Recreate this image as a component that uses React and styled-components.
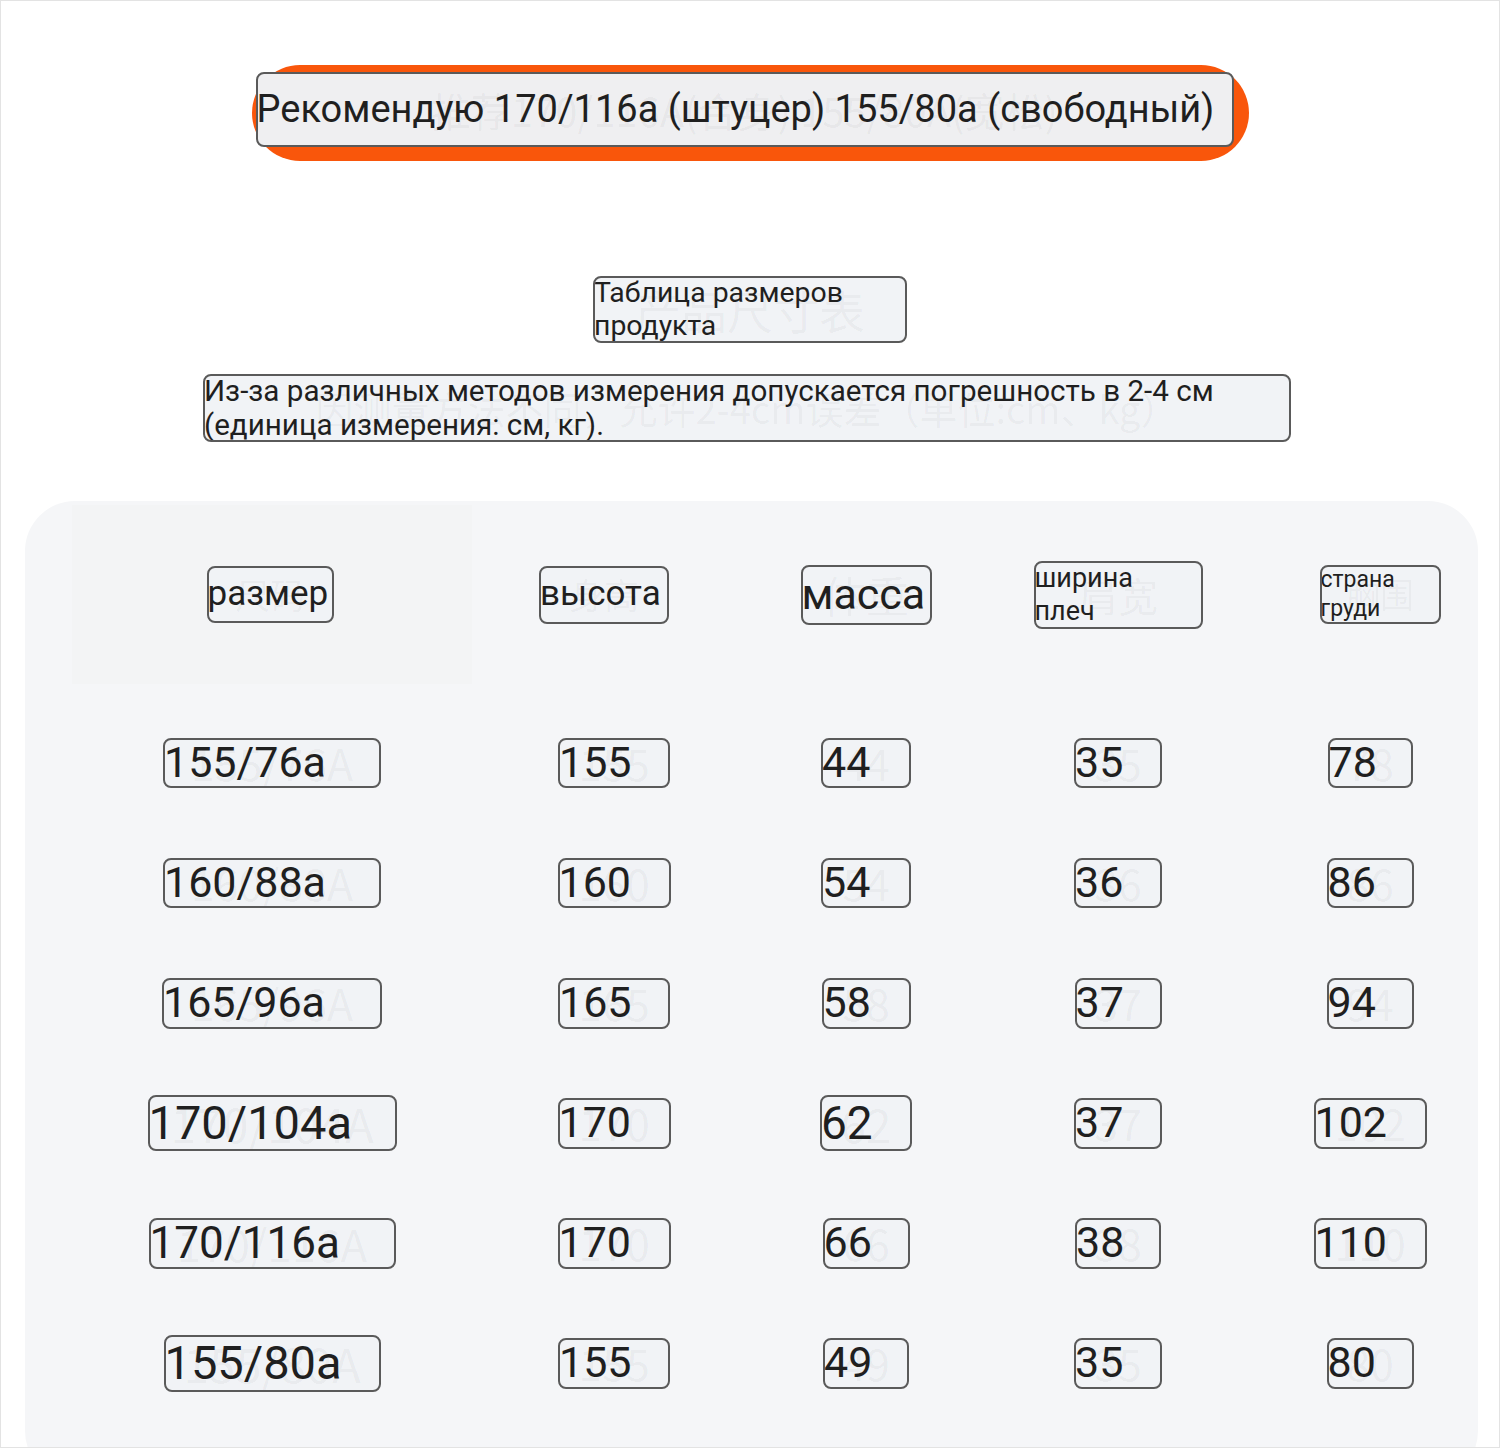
import React from "react";
import styled, { createGlobalStyle } from "styled-components";

const GlobalStyle = createGlobalStyle`
  html, body {
    margin: 0;
    padding: 0;
    background: #ffffff;
  }
  body {
    font-family: Roboto, "Noto Sans", "Noto Sans CJK SC", sans-serif;
    color: #1f1f1f;
  }
`;

const Frame = styled.div`
  box-sizing: border-box;
  width: 1500px;
  height: 1448px;
  border: 1px solid #e3e3e3;
  overflow: hidden;
  display: flex;
  flex-direction: column;
  align-items: center;
  padding-top: 64px;
  background: #ffffff;
`;

const Pill = styled.div`
  box-sizing: border-box;
  width: 997px;
  height: 96px;
  border-radius: 48px;
  background: #f9560b;
  padding: 7px 16px 14px 4px;
  display: flex;
`;

const Box = styled.div`
  position: relative;
  box-sizing: border-box;
  flex: none;
  width: ${(p) => p.$w}px;
  height: ${(p) => p.$h}px;
  margin-left: ${(p) => (p.$dx || 0) * 2}px;
  border: 2px solid #5a5a5a;
  border-radius: 8px;
  background: ${(p) => p.$bg || "#f1f3f6"};
  display: flex;
  align-items: center;
  overflow: hidden;
  font-size: ${(p) => p.$fs}px;
  line-height: ${(p) => p.$lh || 1.15};
`;

const Ghost = styled.span`
  position: absolute;
  inset: 0;
  display: flex;
  align-items: center;
  justify-content: center;
  white-space: nowrap;
  color: rgba(0, 0, 0, 0.045);
  font-size: ${(p) => p.$fs}px;
  font-family: "Noto Sans CJK SC", Roboto, sans-serif;
`;

const Label = styled.span`
  position: relative;
  white-space: pre-line;
  color: #1f1f1f;
  margin-left: -1px;
`;

const Title = styled.div`
  margin-top: 115px;
`;

const Note = styled.div`
  margin-top: 31px;
  margin-left: -6px;
`;

const Panel = styled.div`
  box-sizing: border-box;
  align-self: flex-start;
  margin: 59px 0 0 24px;
  width: 1453px;
  height: 980px;
  flex: none;
  border-radius: 50px;
  background: #f5f6f8;
  padding: 4px 0 0 47px;
`;

const Grid = styled.div`
  display: grid;
  grid-template-columns: 400px 284px 220px 284px 220px;
`;

const HeadCell = styled.div`
  height: 179px;
  display: flex;
  align-items: center;
  justify-content: center;
  background: ${(p) => (p.$shaded ? "#f3f4f5" : "transparent")};
  margin-bottom: 19px;
`;

const Cell = styled.div`
  height: 120px;
  display: flex;
  align-items: center;
  justify-content: center;
`;

const TransBox = ({ text, ghost, w, h, fs, lh, gfs, bg, dx }) => (
  <Box $w={w} $h={h} $fs={fs} $lh={lh} $bg={bg} $dx={dx}>
    <Ghost $fs={gfs || fs}>{ghost}</Ghost>
    <Label>{text}</Label>
  </Box>
);

const header = [
  { text: "размер", ghost: "尺码", w: 127, h: 57, fs: 35, dx: -2 },
  { text: "высота", ghost: "身高", w: 130, h: 58, fs: 35, dx: -10 },
  { text: "масса", ghost: "体重", w: 131, h: 60, fs: 43 },
  { text: "ширина\nплеч", ghost: "肩宽", w: 169, h: 68, fs: 27, lh: 1.2, gfs: 40 },
  { text: "страна\nгруди", ghost: "胸围", w: 121, h: 59, fs: 23, lh: 1.25, gfs: 34, dx: 10 },
];

const rows = [
  [
    ["155/76a", "155/76A", 218, 50, 43],
    ["155", "155", 112, 50, 43],
    ["44", "44", 90, 50, 43],
    ["35", "35", 88, 50, 43],
    ["78", "78", 85, 50, 43],
  ],
  [
    ["160/88a", "160/88A", 218, 50, 43],
    ["160", "160", 113, 50, 43],
    ["54", "54", 90, 50, 43],
    ["36", "36", 88, 50, 43],
    ["86", "86", 87, 50, 43],
  ],
  [
    ["165/96a", "165/96A", 220, 51, 43],
    ["165", "165", 112, 51, 43],
    ["58", "58", 89, 51, 43],
    ["37", "37", 87, 51, 43],
    ["94", "94", 87, 51, 43],
  ],
  [
    ["170/104a", "170/104A", 249, 56, 47],
    ["170", "170", 113, 51, 43],
    ["62", "62", 92, 56, 46],
    ["37", "37", 88, 51, 43],
    ["102", "102", 113, 51, 43],
  ],
  [
    ["170/116a", "170/116A", 247, 51, 44],
    ["170", "170", 113, 51, 43],
    ["66", "66", 87, 51, 43],
    ["38", "38", 86, 51, 43],
    ["110", "110", 113, 51, 43],
  ],
  [
    ["155/80a", "155/80A", 217, 57, 47],
    ["155", "155", 112, 51, 43],
    ["49", "49", 86, 51, 43],
    ["35", "35", 88, 51, 43],
    ["80", "80", 87, 51, 43],
  ],
];

const App = () => (
  <>
    <GlobalStyle />
    <Frame>
      <Pill>
        <TransBox
          text="Рекомендую 170/116a (штуцер) 155/80a (свободный)"
          ghost="推荐170/116A(合身) 155/80A(宽松)"
          w={978}
          h={75}
          fs={38}
          gfs={40}
          bg="#efeff1"
        />
      </Pill>
      <Title>
        <TransBox
          text={"Таблица размеров\nпродукта"}
          ghost="产品尺寸表"
          w={314}
          h={67}
          fs={28.4}
          lh={1.16}
          gfs={46}
        />
      </Title>
      <Note>
        <TransBox
          text={"Из-за различных методов измерения допускается погрешность в 2-4 см\n(единица измерения: см, кг)."}
          ghost="因测量方法不同，允许2-4cm误差（单位:cm、kg）"
          w={1088}
          h={68}
          fs={29.6}
          lh={1.15}
          gfs={38}
        />
      </Note>
      <Panel>
        <Grid>
          {header.map((h, i) => (
            <HeadCell key={i} $shaded={i === 0}>
              <TransBox {...h} />
            </HeadCell>
          ))}
          {rows.map((row, r) =>
            row.map(([text, ghost, w, h, fs], c) => (
              <Cell key={`${r}-${c}`}>
                <TransBox text={text} ghost={ghost} w={w} h={h} fs={fs} />
              </Cell>
            ))
          )}
        </Grid>
      </Panel>
    </Frame>
  </>
);

export default App;
